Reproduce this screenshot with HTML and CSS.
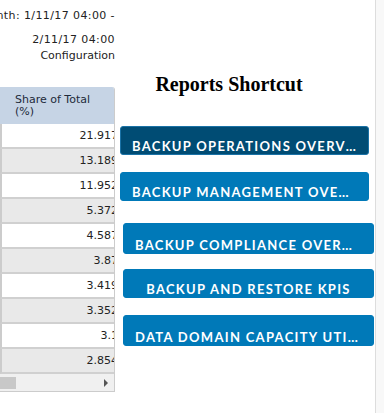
FILE: index.html
```html
<!DOCTYPE html>
<html>
<head>
    <title>Reports</title>
    <link rel="stylesheet" href="styles.css">
</head>
<body>
    <div class="page">
        <div class="report">
            <div class="range">
                <div class="range_line first date"><span>Month: 1/11/17 04:00 -</span></div>
                <div class="range_line date"><span>2/11/17 04:00</span></div>
                <div class="range_line"><span>Configuration</span></div>
            </div>
            <div class="grid">
                <div class="grid_inner">
                    <div class="grid_head">Share of Total (%)</div>
                    <div class="grid_row">21.917</div>
                    <div class="grid_row">13.189</div>
                    <div class="grid_row">11.952</div>
                    <div class="grid_row">5.372</div>
                    <div class="grid_row">4.587</div>
                    <div class="grid_row">3.87</div>
                    <div class="grid_row">3.419</div>
                    <div class="grid_row">3.352</div>
                    <div class="grid_row">3.1</div>
                    <div class="grid_row">2.854</div>
                </div>
                <div class="hscroll">
                    <div class="hscroll_thumb"></div>
                    <div class="hscroll_arrow"></div>
                </div>
            </div>
        </div>
        <div class="shortcuts">
            <h2>Reports Shortcut</h2>
            <button class="shortcut active">Backup Operations Overview</button>
            <button class="shortcut">Backup Management Overview</button>
            <button class="shortcut shifted tall">Backup Compliance Overview</button>
            <button class="shortcut shifted">Backup and Restore KPIs</button>
            <button class="shortcut shifted tall">Data Domain Capacity Utilization</button>
        </div>
        <div class="gutter"></div>
    </div>
</body>
</html>
```

FILE: styles.css
```css
body { margin: 0; font-family: "DejaVu Sans", sans-serif; font-size: 11px; color: #222; background: #fff; }
.page { display: flex; height: 413px; overflow: hidden; }

/* left report column */
.report { width: 115px; flex: none; }
.range { padding-top: 8px; height: 87px; box-sizing: border-box; }
.range_line { display: flex; justify-content: flex-end; white-space: nowrap; line-height: 16px; overflow: hidden; }
.range_line.date { letter-spacing: 0.4px; }
.range_line.first { margin-bottom: 8px; }

.grid { width: 115px; border-right: 1px solid #ccc; border-bottom: 1px solid #ccc; border-top-right-radius: 3px; overflow: hidden; box-sizing: border-box; }
.grid_inner { width: 125px; }
.grid_head { background-color: #c6d4e5; padding: 7px 15px 6px 15px; line-height: 12px; color: #1d2a3a; }
.grid_row { height: 25px; line-height: 23px; border-left: 2px solid #ccc; border-bottom: 2px solid #d0d0d0; box-sizing: border-box; text-align: right; padding-right: 7px; background: #fff; }
.grid_row:nth-child(odd) { background: #e9e9e9; }
.hscroll { height: 17px; background: #f0f0f0; display: flex; align-items: center; justify-content: space-between; }
.hscroll_thumb { width: 16px; height: 12px; background: #c8c8c8; }
.hscroll_arrow { width: 0; height: 0; border-left: 4px solid #555; border-top: 4px solid transparent; border-bottom: 4px solid transparent; margin-right: 6px; }

/* shortcuts panel */
.shortcuts { width: 261px; flex: none; border-right: 1px solid #ddd; box-sizing: border-box; display: flex; flex-direction: column; align-items: flex-start; }
.shortcuts h2 { margin: 72px 0 0 0; align-self: stretch; padding-right: 32px; text-align: center; font-family: "Liberation Serif", serif; font-size: 20px; line-height: 24px; font-weight: bold; color: #000; }
.shortcut { width: 249px; height: 29px; margin: 17px 0 0 5px; padding: 11px 11px 0 11px; box-sizing: border-box; border: 1px solid #0079b8; border-radius: 3px; background: #0079b8; color: #fff; font-family: Lato, sans-serif; font-weight: bold; font-size: 13px; line-height: 14px; letter-spacing: 1.3px; text-transform: uppercase; text-align: center; white-space: nowrap; overflow: hidden; text-overflow: ellipsis; }
.shortcut.active { margin-top: 30px; background: #004c74; border-color: #1a72a6; }
.shortcut.shifted { width: 251px; margin-left: 8px; margin-top: 15px; }
.shortcut.shifted.tall { height: 31px; padding-top: 12px; }
.shortcut:nth-of-type(3) { margin-top: 22px; }
.shortcut:nth-of-type(5) { margin-top: 17px; }
.gutter { flex: 1; background: #f8f8f8; }
```
